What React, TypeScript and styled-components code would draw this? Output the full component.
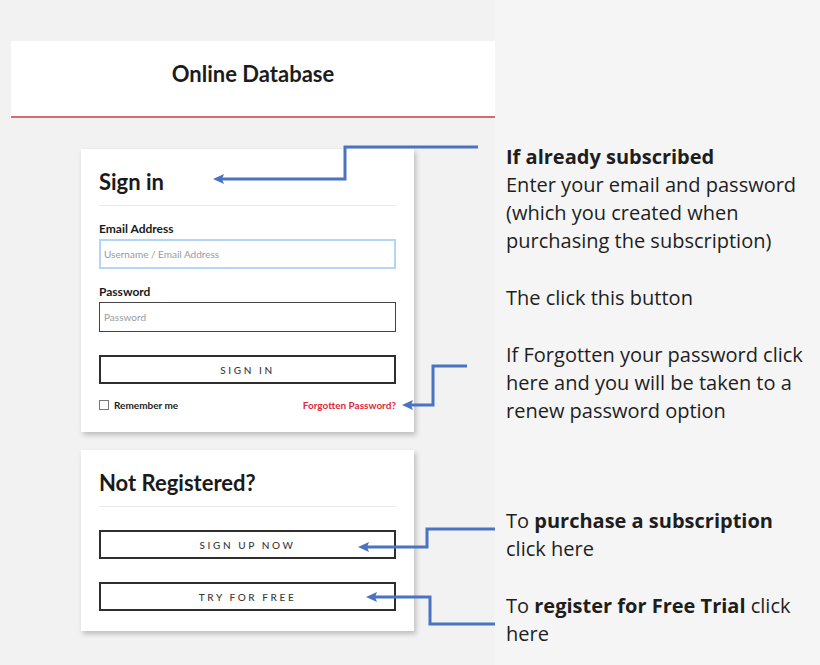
import React from 'react';
import styled, { createGlobalStyle } from 'styled-components';

const GlobalStyle = createGlobalStyle`
  html, body {
    margin: 0;
    padding: 0;
    background: #f5f5f5;
  }
  * { box-sizing: border-box; }
`;

const Page = styled.div`
  position: relative;
  width: 820px;
  height: 665px;
  display: flex;
  flex-direction: row;
  overflow: hidden;
  background: #f5f5f5;
`;

const LeftColumn = styled.div`
  width: 495px;
  padding: 41px 0 0 11px;
  background: #f2f2f2;
`;

const Header = styled.header`
  height: 77px;
  background: #fff;
  border-bottom: 2px solid #d96a72;
  display: flex;
  align-items: center;
  justify-content: center;
  padding-bottom: 10px;
  font-family: Lato, 'Noto Sans', sans-serif;
  font-weight: 700;
  font-size: 22px;
  color: #1c1c1c;
`;

const Cards = styled.div`
  display: flex;
  flex-direction: column;
  gap: 18px;
  padding: 31px 0 0 70px;
`;

const Card = styled.section`
  width: 333px;
  background: #fff;
  padding: 20px 18px 20px 18px;
  box-shadow: 2px 3px 5px rgba(0, 0, 0, 0.22);
  font-family: Lato, 'Noto Sans', sans-serif;
`;

const CardTitle = styled.h2`
  margin: 0;
  font-size: 22px;
  line-height: 26px;
  font-weight: 700;
  color: #1a1a1a;
  padding-bottom: 10px;
  border-bottom: 1px solid #ececec;
`;

const Label = styled.div`
  margin-top: 15px;
  font-size: 12px;
  line-height: 16px;
  font-weight: 700;
  color: #1a1a1a;
`;

const Input = styled.div<{ $focused?: boolean }>`
  margin-top: 2px;
  height: 30px;
  border: ${p => (p.$focused ? '2px solid #b4d4f8' : '1px solid #444')};
  padding-left: ${p => (p.$focused ? '3px' : '4px')};
  display: flex;
  align-items: center;
  font-size: 10px;
  color: #9a9a9a;
`;

const OutlineButton = styled.div<{ $gap: number }>`
  margin-top: ${p => p.$gap}px;
  height: 29px;
  border: 2px solid #2e2e2e;
  display: flex;
  align-items: center;
  justify-content: center;
  font-size: 10px;
  letter-spacing: 2.6px;
  color: #3a3a3a;
  font-weight: 500;
`;

const Row = styled.div`
  margin-top: 14px;
  display: flex;
  align-items: center;
  justify-content: space-between;
  font-size: 10px;
  line-height: 14px;
  font-weight: 700;
`;

const Remember = styled.label`
  display: flex;
  align-items: center;
  gap: 5px;
  color: #222;
`;

const Checkbox = styled.span`
  width: 10px;
  height: 10px;
  border: 1px solid #777;
  background: #fff;
`;

const ForgotLink = styled.span`
  color: #e0283d;
`;

const Notes = styled.div`
  flex: 1;
  padding: 143px 0 0 11px;
  font-family: 'Open Sans', 'Noto Sans', sans-serif;
  font-size: 20px;
  line-height: 28px;
  color: #1e1e1e;
  white-space: nowrap;
`;

const Note = styled.p<{ $gap: number }>`
  margin: ${p => p.$gap}px 0 0 0;
  b { font-weight: 700; }
`;

const Arrows = styled.svg`
  position: absolute;
  left: 0;
  top: 0;
  pointer-events: none;
`;

const ARROW = '#4a74c2';

const arrowPaths = [
  { d: 'M478 147 H345 V179 H222', tip: [213, 179] },
  { d: 'M467 366 H433 V405 H411', tip: [402, 405] },
  { d: 'M495 529 H427 V547 H367', tip: [358, 547] },
  { d: 'M495 624 H430 V597 H375', tip: [366, 597] },
];

const App: React.FC = () => {
  return (
    <React.Fragment>
      <GlobalStyle />
      <Page>
        <LeftColumn>
          <Header>Online Database</Header>
          <Cards>
            <Card>
              <CardTitle>Sign in</CardTitle>
              <Label>Email Address</Label>
              <Input $focused>Username / Email Address</Input>
              <Label>Password</Label>
              <Input>Password</Input>
              <OutlineButton $gap={23}>SIGN IN</OutlineButton>
              <Row>
                <Remember>
                  <Checkbox />
                  Remember me
                </Remember>
                <ForgotLink>Forgotten Password?</ForgotLink>
              </Row>
            </Card>
            <Card>
              <CardTitle>Not Registered?</CardTitle>
              <OutlineButton $gap={23}>SIGN UP NOW</OutlineButton>
              <OutlineButton $gap={23}>TRY FOR FREE</OutlineButton>
            </Card>
          </Cards>
        </LeftColumn>
        <Notes>
          <Note $gap={0}>
            <b>If already subscribed</b>
            <br />
            Enter your email and password
            <br />
            (which you created when
            <br />
            purchasing the subscription)
          </Note>
          <Note $gap={29}>The click this button</Note>
          <Note $gap={29}>
            If Forgotten your password click
            <br />
            here and you will be taken to a
            <br />
            renew password option
          </Note>
          <Note $gap={82}>
            To <b>purchase a subscription</b>
            <br />
            click here
          </Note>
          <Note $gap={29}>
            To <b>register for Free Trial</b> click
            <br />
            here
          </Note>
        </Notes>
        <Arrows width={820} height={665} viewBox="0 0 820 665">
          {arrowPaths.map((a, i) => (
            <g key={i}>
              <path d={a.d} fill="none" stroke={ARROW} strokeWidth={3} />
              <polygon
                points={`${a.tip[0]},${a.tip[1]} ${a.tip[0] + 11},${a.tip[1] - 5} ${a.tip[0] + 9},${a.tip[1]} ${a.tip[0] + 11},${a.tip[1] + 5}`}
                fill={ARROW}
              />
            </g>
          ))}
        </Arrows>
      </Page>
    </React.Fragment>
  );
};

export default App;
